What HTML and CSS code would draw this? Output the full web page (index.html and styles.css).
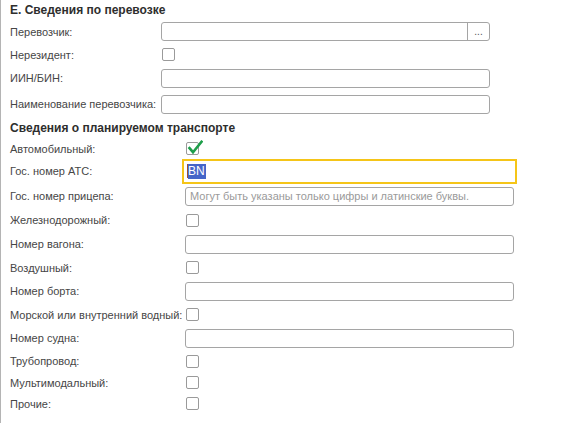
FILE: index.html
```html
<!DOCTYPE html>
<html lang="ru">
<head>
<meta charset="utf-8">
<link rel="stylesheet" href="styles.css">
</head>
<body>
<div class="page">
  <div class="section s1">
    <div class="head h1">Е. Сведения по перевозке</div>
    <div class="row r23"><span class="label">Перевозчик:</span><div class="input with-btn"><span class="field"></span><span class="btn">...</span></div></div>
    <div class="row r23"><span class="label">Нерезидент:</span><span class="cb"></span></div>
    <div class="row r24"><span class="label">ИИН/БИН:</span><div class="input"></div></div>
    <div class="row r24 gap2"><span class="label">Наименование перевозчика:</span><div class="input"></div></div>
  </div>
  <div class="section s2">
    <div class="head h2">Сведения о планируемом транспорте</div>
    <div class="row r19"><span class="label">Автомобильный:</span><span class="cb checked"><svg class="tick" viewBox="0 0 16 16" width="16" height="16"><path d="M2.5 8.2 L6 12.2 L14.5 1.8" fill="none" stroke="#1e9e4a" stroke-width="2.6" stroke-linecap="square"/></svg></span></div>
    <div class="row r26"><span class="label">Гос. номер АТС:</span><div class="input focused"><span class="caret"></span><span class="sel">BN</span></div></div>
    <div class="row r24"><span class="label">Гос. номер прицепа:</span><div class="input"><span class="ph">Могут быть указаны только цифры и латинские буквы.</span></div></div>
    <div class="row r24"><span class="label">Железнодорожный:</span><span class="cb"></span></div>
    <div class="row r24"><span class="label">Номер вагона:</span><div class="input"></div></div>
    <div class="row r23"><span class="label">Воздушный:</span><span class="cb"></span></div>
    <div class="row r24"><span class="label">Номер борта:</span><div class="input"></div></div>
    <div class="row r23"><span class="label">Морской или внутренний водный:</span><span class="cb"></span></div>
    <div class="row r24"><span class="label">Номер судна:</span><div class="input"></div></div>
    <div class="row r22"><span class="label">Трубопровод:</span><span class="cb"></span></div>
    <div class="row r21"><span class="label">Мультимодальный:</span><span class="cb"></span></div>
    <div class="row r21"><span class="label">Прочие:</span><span class="cb"></span></div>
  </div>
</div>
</body>
</html>
```
FILE: styles.css
```css
html, body {
  margin: 0;
  padding: 0;
  background: #ffffff;
}
body {
  font-family: "Liberation Sans", Arial, sans-serif;
  font-size: 11px;
  color: #464646;
  width: 577px;
  height: 423px;
  overflow: hidden;
}
.page {
  height: 423px;
  border-left: 1px solid #b4b4b4;
  box-sizing: border-box;
}
.section {
  display: flex;
  flex-direction: column;
  padding-left: 9px;
}
.head {
  font-weight: bold;
  color: #2e2e2e;
  display: flex;
  align-items: center;
  font-size: 12px;
}
.h1 { height: 20px; }
.h2 { height: 22px; margin-top: 1px; }
.row {
  display: flex;
  align-items: center;
}
.r19 { height: 19px; }
.r21 { height: 21px; }
.r22 { height: 22px; }
.r23 { height: 23px; }
.r24 { height: 24px; }
.r26 { height: 26px; }
.gap2 { margin-top: 2px; }
.s1 .label { width: 151px; flex: none; white-space: nowrap; }
.s2 .label { width: 175px; flex: none; white-space: nowrap; }
.input {
  width: 329px;
  height: 19px;
  box-sizing: border-box;
  border: 1px solid #a5a5a5;
  border-radius: 3px;
  display: flex;
  align-items: center;
  padding-left: 4px;
  background: #fff;
}
.with-btn {
  padding-left: 0;
}
.with-btn .field {
  flex: 1;
  height: 100%;
  border-right: 1px solid #a5a5a5;
}
.btn {
  width: 21px;
  height: 100%;
  display: flex;
  align-items: flex-end;
  justify-content: center;
  font-size: 10px;
  color: #555;
  padding-bottom: 3px;
  box-sizing: border-box;
  line-height: 10px;
}
.input.focused {
  width: 335px;
  height: 25px;
  margin-left: -3px;
  border: 2px solid #f5c518;
  border-radius: 0;
  padding-left: 3px;
}
.caret {
  width: 1px;
  height: 14px;
  background: #a0522d;
}
.sel {
  background: #4565c8;
  color: #ffffff;
  line-height: 15px;
  font-size: 12px;
  padding: 0 1px 0 0;
}
.ph {
  color: #9a9a9a;
  white-space: nowrap;
}
.cb {
  width: 13px;
  height: 13px;
  box-sizing: border-box;
  border: 1px solid #9a9a9a;
  border-radius: 2px;
  margin-left: 1px;
  position: relative;
  background: #fff;
}
.tick {
  position: absolute;
  left: 0px;
  top: -3px;
}
```
